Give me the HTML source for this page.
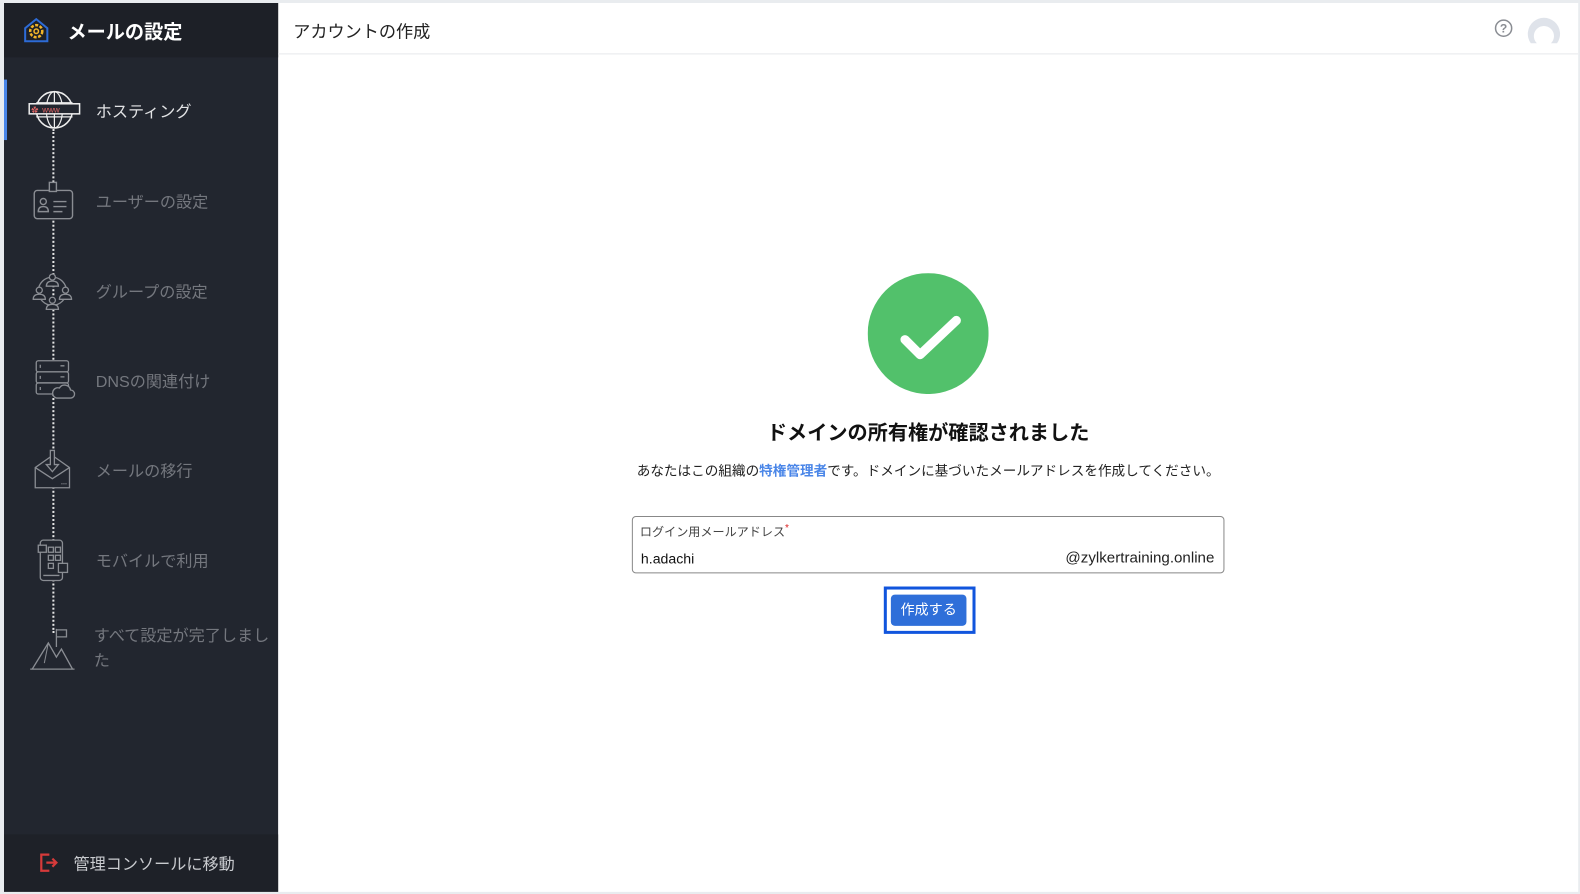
<!DOCTYPE html>
<html><head><meta charset="utf-8"><style>
*{margin:0;padding:0;box-sizing:border-box}
html,body{width:1580px;height:894px;overflow:hidden}
body{background:#e9ecef;font-family:"Liberation Sans","Noto Sans CJK JP",sans-serif;position:relative}
.frame{position:absolute;left:4px;top:3px;width:1562px;height:882px;background:#fff;overflow:hidden;transform:scale(1.0078);transform-origin:0 0}
.side{position:absolute;left:0;top:0;width:272px;height:882px;background:#22262f}
.shead{position:absolute;left:0;top:0;width:272px;height:54px;background:#1d2027}
.shead span{position:absolute;left:63px;top:14px;color:#fff;font-size:19px;font-weight:bold}
.item{position:absolute;left:91px;font-size:16px;color:#74777e}
.ic{position:absolute;left:24px}
.bar{position:absolute;left:0;top:76px;width:3px;height:60px;background:#4a86e8}
.line{position:absolute;left:48px;top:125px;height:500px;border-left:2px dotted #e5e5e5}
.foot{position:absolute;left:0;top:825px;width:272px;height:57px;background:#1e2128}
.foot span{position:absolute;left:69px;top:16px;color:#c9cbcf;font-size:16px}
.main{position:absolute;left:272px;top:0;right:0;height:882px}
.mhead{height:51px;border-bottom:1px solid #e6e8eb;position:relative}
.mhead .t{position:absolute;left:15px;top:14px;font-size:17px;color:#222}
</style></head><body>
<div class="frame">
<div class="side">
 <div class="shead">
  <svg style="position:absolute;left:18px;top:13px" width="28" height="28" viewBox="0 0 28 28"><path d="M3 12 L14 3 L25 12 V25 H3 Z" fill="none" stroke="#2d6bd6" stroke-width="2"/><circle cx="14" cy="15" r="6" fill="none" stroke="#f0b429" stroke-width="2.5" stroke-dasharray="3 1.5"/><circle cx="14" cy="15" r="2.2" fill="none" stroke="#f0b429" stroke-width="1.5"/></svg>
  <span>メールの設定</span>
 </div>
 <div class="bar"></div>
 <div class="line"></div>
 <svg class="ic" style="top:84px" width="52" height="44" viewBox="0 0 52 44"><circle cx="26" cy="22" r="18" fill="#22262f" stroke="#eee" stroke-width="1.5"/><ellipse cx="26" cy="22" rx="8" ry="18" fill="none" stroke="#eee" stroke-width="1.2"/><path d="M8 15H44M8 29H44M26 4V40" stroke="#eee" stroke-width="1.2"/><rect x="1" y="16" width="50" height="10" fill="#22262f" stroke="#eee" stroke-width="1.5"/><text x="14" y="24.5" font-size="8" fill="#e06666" font-family="Liberation Sans">www</text><text x="3" y="24.5" font-size="7" fill="#e06666">✿</text></svg>
 <div class="item" style="top:94px;color:#e2e3e5">ホスティング</div>
 <svg class="ic" style="top:176px" width="48" height="40" viewBox="0 0 48 40"><rect x="6" y="10" width="38" height="28" rx="3" fill="#22262f" stroke="#8a8d93" stroke-width="1.4"/><rect x="21" y="2" width="7" height="9" fill="#22262f" stroke="#8a8d93" stroke-width="1.4"/><circle cx="15" cy="21" r="3" fill="none" stroke="#8a8d93" stroke-width="1.4"/><path d="M10 31 q0-5 5-5 q5 0 5 5z" fill="none" stroke="#8a8d93" stroke-width="1.4"/><path d="M25 21H38M25 26H38M25 31H34" stroke="#8a8d93" stroke-width="1.4"/></svg>
 <div class="item" style="top:184px">ユーザーの設定</div>
 <svg class="ic" style="top:264px" width="48" height="44" viewBox="0 0 48 44"><circle cx="24" cy="22" r="14" fill="none" stroke="#8a8d93" stroke-width="1.3"/><g fill="#22262f" stroke="#8a8d93" stroke-width="1.3"><circle cx="24" cy="8" r="3"/><path d="M18 17q0-5 6-5t6 5z"/><circle cx="11" cy="21" r="3"/><path d="M5 30q0-5 6-5t6 5z"/><circle cx="37" cy="21" r="3"/><path d="M31 30q0-5 6-5t6 5z"/><circle cx="24" cy="31" r="3"/><path d="M18 40q0-5 6-5t6 5z"/></g></svg>
 <div class="item" style="top:273px">グループの設定</div>
 <svg class="ic" style="top:352px" width="48" height="44" viewBox="0 0 48 44"><g fill="#22262f" stroke="#8a8d93" stroke-width="1.3"><rect x="8" y="3" width="32" height="11" rx="2"/><rect x="8" y="14" width="32" height="11" rx="2"/><rect x="8" y="25" width="32" height="11" rx="2"/><path d="M28 40h14a4 4 0 0 0 0-8a6 6 0 0 0-11-2a5 5 0 0 0-3 10z"/></g><path d="M12 7v3M12 18v3M12 29v3M32 8h4M32 19h4" stroke="#8a8d93" stroke-width="1.3"/></svg>
 <div class="item" style="top:362px">DNSの関連付け</div>
 <svg class="ic" style="top:442px" width="48" height="44" viewBox="0 0 48 44"><path d="M7 19 L24 7 L41 19 V39 H7 Z" fill="#22262f" stroke="#8a8d93" stroke-width="1.3"/><path d="M7 19 L24 30 L41 19" fill="none" stroke="#8a8d93" stroke-width="1.3"/><path d="M22 2h4v14h4l-6 7-6-7h4z" fill="#22262f" stroke="#8a8d93" stroke-width="1.3"/><path d="M33 35h5" stroke="#8a8d93" stroke-width="1.3" stroke-dasharray="1 1"/></svg>
 <div class="item" style="top:451px">メールの移行</div>
 <svg class="ic" style="top:531px" width="48" height="44" viewBox="0 0 48 44"><g fill="#22262f" stroke="#8a8d93" stroke-width="1.3"><rect x="12" y="2" width="22" height="40" rx="3"/><rect x="10" y="7" width="8" height="7"/><rect x="20" y="9" width="5" height="5"/><rect x="27" y="9" width="5" height="5"/><rect x="20" y="17" width="5" height="5"/><rect x="27" y="17" width="5" height="5"/><rect x="20" y="25" width="5" height="5"/><rect x="30" y="25" width="9" height="9"/></g><path d="M15 37h16" stroke="#8a8d93" stroke-width="1.3"/></svg>
 <div class="item" style="top:540px">モバイルで利用</div>
 <svg class="ic" style="top:619px" width="48" height="46" viewBox="0 0 48 46"><path d="M4 42 L20 16 L28 30 L33 22 L44 42 Z M2 42H46" fill="#22262f" stroke="#8a8d93" stroke-width="1.3"/><path d="M28 2V20 M28 3h10v7h-10" fill="none" stroke="#8a8d93" stroke-width="1.3"/><path d="M20 16 L16 36" stroke="#8a8d93" stroke-width="1"/></svg>
 <div class="item" style="top:616px;left:89px;line-height:25px">すべて設定が完了しまし<br>た</div>
 <div class="foot">
  <svg style="position:absolute;left:34px;top:18px" width="22" height="20" viewBox="0 0 22 20"><path d="M11 2H3V18H11M3 2V18" fill="none" stroke="#d63a3a" stroke-width="2.2"/><path d="M8 10H18M14 6L18 10L14 14" fill="none" stroke="#d63a3a" stroke-width="2.2"/></svg>
  <span>管理コンソールに移動</span>
 </div>
</div>
<div class="main">
 <div class="mhead"><span class="t">アカウントの作成</span>
  <svg style="position:absolute;right:64px;top:15px" width="20" height="20" viewBox="0 0 20 20"><circle cx="10" cy="10" r="8" fill="none" stroke="#8a8d93" stroke-width="1.5"/><text x="10" y="14.5" font-size="12" font-weight="bold" text-anchor="middle" fill="#8a8d93" font-family="Liberation Sans">?</text></svg>
  <svg style="position:absolute;right:14px;top:4px" width="40" height="40" viewBox="0 0 40 40"><path d="M7 36 A16 16 0 1 1 33 36 L27 36 A10 10 0 1 0 13 36 Z" fill="#dfe3ea"/></svg>
 </div>
 <svg style="position:absolute;left:585px;top:268px" width="120" height="120" viewBox="0 0 120 120"><circle cx="60" cy="60" r="60" fill="#52c16b"/><path d="M37 66 L52 81 L88 47" fill="none" stroke="#fff" stroke-width="9" stroke-linecap="round" stroke-linejoin="round"/></svg>
 <div style="position:absolute;left:0;width:1290px;top:410px;text-align:center;font-size:20px;font-weight:bold;color:#111">ドメインの所有権が確認されました</div>
 <div style="position:absolute;left:0;width:1290px;top:453px;text-align:center;font-size:13.5px;color:#222">あなたはこの組織の<span style="color:#4a86e8;font-weight:bold">特権管理者</span>です。ドメインに基づいたメールアドレスを作成してください。</div>
 <div style="position:absolute;left:351px;top:509px;width:588px;height:57px;border:1px solid #888;border-radius:4px">
  <div style="position:absolute;left:7px;top:6px;font-size:12px;color:#444">ログイン用メールアドレス<span style="color:#d22;font-size:10px;vertical-align:top">*</span></div>
  <div style="position:absolute;left:8px;top:33px;font-size:14px;color:#111">h.adachi</div>
  <div style="position:absolute;right:9px;top:32px;font-size:15px;color:#222">@zylkertraining.online</div>
 </div>
 <div style="position:absolute;left:601px;top:579px;width:91px;height:47px;border:3px solid #1155dd"></div>
 <div style="position:absolute;left:608px;top:587px;width:75px;height:31px;background:#2f6fd9;border-radius:4px;color:#fff;font-size:14px;text-align:center;line-height:31px">作成する</div>
</div>
</div>
</body></html>
